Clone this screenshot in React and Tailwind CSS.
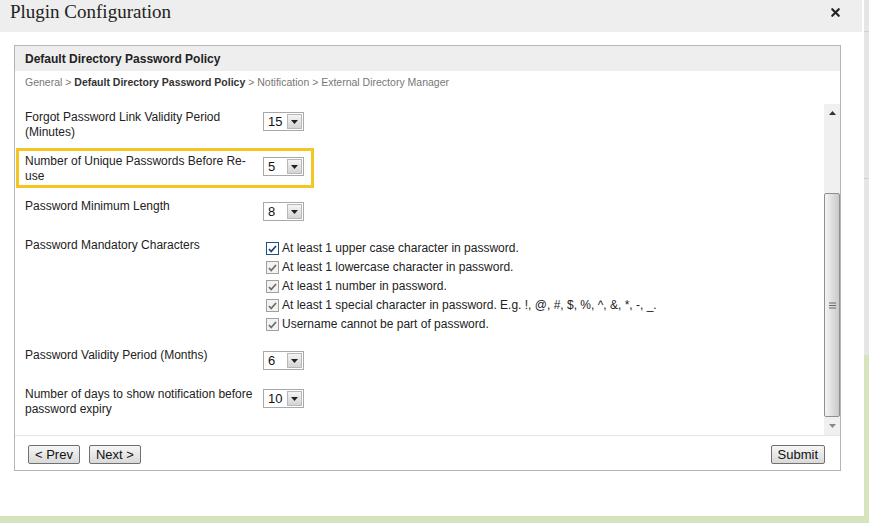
import { X } from 'lucide-react';

const ROWS_FONT = { fontFamily: '"Liberation Sans", Arial, sans-serif' };

function Select({ value }) {
  return (
    <div className="flex h-[19px] w-[41px] shrink-0 items-stretch border border-[#a9a9a9] bg-white">
      <span className="flex-1 pl-[4px] text-[13px] leading-[17px] text-[#111]">{value}</span>
      <span className="m-[1px] flex w-[15px] items-center justify-center border border-[#b8b8b8] bg-gradient-to-b from-[#f4f4f4] to-[#d4d4d4]">
        <svg width="7" height="4" viewBox="0 0 7 4">
          <path d="M0 0h7L3.5 4z" fill="#222" />
        </svg>
      </span>
    </div>
  );
}

function Check({ active }) {
  return (
    <span
      className={`flex h-[13px] w-[13px] shrink-0 items-center justify-center border ${
        active ? 'border-[#1c5180] bg-white' : 'border-[#a0a0a0] bg-[#f2f2f2]'
      }`}
    >
      <svg width="9" height="8" viewBox="0 0 9 8">
        <path
          d="M1 4l2.2 2.5L8 1"
          fill="none"
          stroke={active ? '#21407a' : '#6d6d6d'}
          strokeWidth="1.8"
        />
      </svg>
    </span>
  );
}

function Button({ children }) {
  return (
    <button className="h-[19px] rounded-[2px] border border-[#707070] bg-gradient-to-b from-[#f6f6f6] to-[#d9d9d9] px-[6px] text-[13px] leading-[16px] text-[#111]">
      {children}
    </button>
  );
}

const checks = [
  'At least 1 upper case character in password.',
  'At least 1 lowercase character in password.',
  'At least 1 number in password.',
  'At least 1 special character in password. E.g. !, @, #, $, %, ^, &, *, -, _.',
  'Username cannot be part of password.',
];

export default function App() {
  return (
    <div className="flex h-[523px] w-[869px] flex-col bg-[#d6e4bd]" style={ROWS_FONT}>
      <div className="flex h-[516px]">
        {/* Dialog */}
        <div className="flex w-[864px] flex-col bg-white">
          <div className="mr-[2px] flex h-[32px] items-start justify-between bg-[#eeeeee] pl-[10px] pr-[20px]">
            <h1
              className="mt-[1px] text-[19px] leading-[22px] text-[#222]"
              style={{ fontFamily: '"Liberation Serif", Georgia, serif' }}
            >
              Plugin Configuration
            </h1>
            <X size={13} strokeWidth={4} className="mt-[6px] text-[#222]" />
          </div>

          {/* Panel */}
          <div className="ml-[14px] mt-[13px] flex h-[426px] w-[827px] flex-col border border-[#b5b5b5]">
            <div className="flex h-[25px] items-center bg-[#eeeeee] pl-[10px] text-[12px] font-bold text-[#222]">
              Default Directory Password Policy
            </div>
            <div className="h-[33px] pl-[10px] pt-[4px] text-[10.5px] leading-[14px] text-[#777]">
              General &gt; <span className="font-bold text-[#333]">Default Directory Password Policy</span> &gt; Notification &gt; External Directory Manager
            </div>

            <div className="flex h-[331px]">
              {/* Content */}
              <div className="flex-1 text-[12px] leading-[15px] text-[#222]">
                <div className="ml-[10px] mt-[6px] flex">
                  <div className="w-[238px]">Forgot Password Link Validity Period (Minutes)</div>
                  <div className="mt-[2px]"><Select value="15" /></div>
                </div>

                <div className="ml-[1px] mt-[8px] flex w-[298px] border-[3px] border-[#f3c623] pb-[1px] pl-[6px] pt-[3px]">
                  <div className="w-[238px]">Number of Unique Passwords Before Re-use</div>
                  <div className="mt-[3px]"><Select value="5" /></div>
                </div>

                <div className="ml-[10px] mt-[11px] flex">
                  <div className="w-[238px]">Password Minimum Length</div>
                  <div className="mt-[3px]"><Select value="8" /></div>
                </div>

                <div className="ml-[10px] mt-[17px] flex">
                  <div className="w-[238px]">Password Mandatory Characters</div>
                  <div className="ml-[3px] mt-[1px] flex flex-col">
                    {checks.map((c, i) => (
                      <label key={c} className="flex h-[19px] items-center gap-[3px]">
                        <Check active={i === 0} />
                        <span>{c}</span>
                      </label>
                    ))}
                  </div>
                </div>

                <div className="ml-[10px] mt-[14px] flex">
                  <div className="w-[238px]">Password Validity Period (Months)</div>
                  <div className="mt-[3px]"><Select value="6" /></div>
                </div>

                <div className="ml-[10px] mt-[17px] flex">
                  <div className="w-[238px]">Number of days to show notification before password expiry</div>
                  <div className="mt-[2px]"><Select value="10" /></div>
                </div>
              </div>

              {/* Scrollbar */}
              <div className="flex w-[16px] flex-col bg-[#f0f0f0]">
                <div className="flex h-[17px] items-center justify-center">
                  <svg width="7" height="4" viewBox="0 0 7 4">
                    <path d="M0 4h7L3.5 0z" fill="#333" />
                  </svg>
                </div>
                <div className="h-[72px]" />
                <div className="flex h-[224px] items-center justify-center rounded-[2px] border border-[#8f8f8f] bg-gradient-to-r from-[#f4f4f4] to-[#c9c9c9]">
                  <svg width="7" height="7" viewBox="0 0 7 7">
                    <path d="M0 1h7M0 3.5h7M0 6h7" stroke="#666" strokeWidth="1" />
                  </svg>
                </div>
                <div className="flex flex-1 items-center justify-center">
                  <svg width="7" height="4" viewBox="0 0 7 4">
                    <path d="M0 0h7L3.5 4z" fill="#888" />
                  </svg>
                </div>
              </div>
            </div>

            <div className="flex flex-1 items-start justify-between border-t border-[#e6e6e6] pl-[13px] pr-[15px] pt-[9px]">
              <div className="flex gap-[9px]">
                <Button>&lt; Prev</Button>
                <Button>Next &gt;</Button>
              </div>
              <Button>Submit</Button>
            </div>
          </div>
        </div>

        {/* Background strip */}
        <div className="flex flex-1 flex-col">
          <div className="h-[355px] bg-[#e6e6e6]">
            <div className="mt-[31px] h-px bg-[#cfcfcf]" />
            <div className="mt-[146px] h-px bg-[#cfcfcf]" />
          </div>
        </div>
      </div>
    </div>
  );
}
